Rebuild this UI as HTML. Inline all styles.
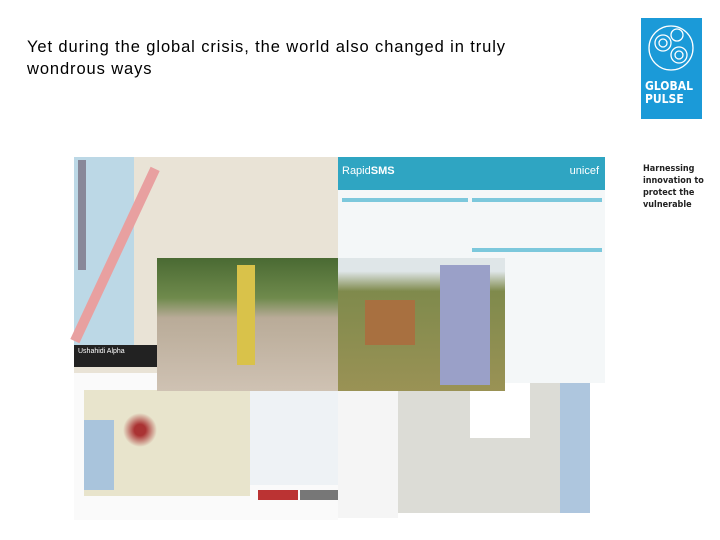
<!DOCTYPE html>
<html><head><style>
body{margin:0;width:720px;height:540px;background:#fff;position:relative;overflow:hidden;font-family:"Liberation Sans",sans-serif}
div{position:absolute;box-sizing:border-box}
</style></head><body>
<div style="left:27px;top:36px;font-size:16.5px;letter-spacing:0.9px;line-height:22px;color:#000">Yet during the global crisis, the world also changed in truly<br>wondrous ways</div>
<div style="left:641px;top:18px;width:61px;height:101px;background:#1b9ad8">
 <svg width="61" height="60" viewBox="0 0 61 60" style="position:absolute;left:0;top:0"><g fill="none" stroke="#fff" stroke-width="1.3">
 <circle cx="30" cy="30" r="22"/><circle cx="22" cy="25" r="8"/><circle cx="22" cy="25" r="4"/><circle cx="38" cy="37" r="8"/><circle cx="38" cy="37" r="4"/><circle cx="36" cy="17" r="6"/></g></svg>
 <div style="left:4px;top:62px;color:#fff;font-weight:bold;font-size:12px;line-height:13px;font-family:'DejaVu Sans Condensed','Liberation Sans',sans-serif">GLOBAL<br>PULSE</div>
</div>
<div style="left:643px;top:163px;font-size:9px;line-height:12px;font-weight:bold;color:#222;font-family:'DejaVu Sans Condensed','Liberation Sans',sans-serif">Harnessing<br>innovation to<br>protect the<br>vulnerable</div>

<!-- top-left map -->
<div style="left:74px;top:157px;width:264px;height:223px;background:#e9e3d6"></div>
<div style="left:74px;top:157px;width:60px;height:190px;background:#bcd8e6"></div>
<div style="left:110px;top:160px;width:10px;height:190px;background:#e8a0a0;transform:rotate(25deg)"></div>
<div style="left:78px;top:160px;width:8px;height:110px;background:#889"></div>
<div style="left:74px;top:345px;width:90px;height:22px;background:#222;color:#fff;font-size:7px;padding:3px 4px">Ushahidi Alpha</div>
<!-- RapidSMS -->
<div style="left:338px;top:157px;width:267px;height:226px;background:#f4f7f8"></div>
<div style="left:338px;top:157px;width:267px;height:33px;background:#2fa5c2;color:#fff;font-size:11px;padding:8px 4px">Rapid<b>SMS</b><span style="position:absolute;right:6px;top:8px">unicef</span></div>
<div style="left:342px;top:198px;width:126px;height:4px;background:#7cc8dc"></div>
<div style="left:472px;top:198px;width:130px;height:4px;background:#7cc8dc"></div>
<div style="left:472px;top:248px;width:130px;height:4px;background:#7cc8dc"></div>
<!-- bottom left -->
<div style="left:74px;top:373px;width:264px;height:147px;background:#fafafa"></div>
<div style="left:84px;top:390px;width:166px;height:106px;background:#e8e4cc"></div>
<div style="left:84px;top:420px;width:30px;height:70px;background:#a9c4dc"></div>
<div style="left:120px;top:410px;width:40px;height:40px;border-radius:50%;background:radial-gradient(#a33 20%,transparent 60%)"></div>
<div style="left:250px;top:390px;width:88px;height:95px;background:#eef2f5"></div>
<div style="left:258px;top:490px;width:40px;height:10px;background:#b33"></div>
<div style="left:300px;top:490px;width:38px;height:10px;background:#777"></div>
<!-- bottom right -->
<div style="left:338px;top:383px;width:60px;height:135px;background:#f5f5f5"></div>
<div style="left:398px;top:383px;width:192px;height:130px;background:#dcdcd6"></div>
<div style="left:560px;top:383px;width:30px;height:130px;background:#aec6de"></div>
<div style="left:470px;top:383px;width:60px;height:55px;background:#fff"></div>
<!-- photos -->
<div style="left:157px;top:258px;width:181px;height:133px;background:linear-gradient(#4a6a33 0%,#6f8a4c 30%,#b9ab98 45%,#cfc2b3 100%)"></div>
<div style="left:237px;top:265px;width:18px;height:100px;background:#d9c24a"></div>
<div style="left:338px;top:258px;width:167px;height:133px;background:linear-gradient(#dfe6e8 0%,#dfe6e8 10%,#7f8a4c 25%,#9a9255 100%)"></div>
<div style="left:440px;top:265px;width:50px;height:120px;background:#9aa0c8"></div>
<div style="left:365px;top:300px;width:50px;height:45px;background:#a87040"></div>
</body></html>
